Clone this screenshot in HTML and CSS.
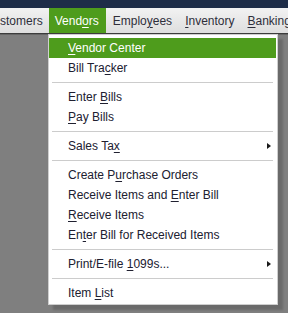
FILE: index.html
```html
<!DOCTYPE html>
<html>
<head>
<meta charset="utf-8">
<link rel="stylesheet" href="styles.css">
</head>
<body>
<div class="titlebar"></div>
<div class="menubar">
  <span class="mitem first">stomers</span>
  <span class="mitem active">Vend<u>o</u>rs</span>
  <span class="mitem">Emplo<u>y</u>ees</span>
  <span class="mitem"><u>I</u>nventory</span>
  <span class="mitem"><u>B</u>anking</span>
</div>
<div class="workspace"></div>
<div class="dropdown">
  <div class="row hl"><u>V</u>endor Center</div>
  <div class="row">Bill Tra<u>c</u>ker</div>
  <div class="sep"></div>
  <div class="row">Enter <u>B</u>ills</div>
  <div class="row"><u>P</u>ay Bills</div>
  <div class="sep"></div>
  <div class="row sub">Sales Ta<u>x</u><span class="arrow"></span></div>
  <div class="sep"></div>
  <div class="row">Create P<u>u</u>rchase Orders</div>
  <div class="row">Receive Items and <u>E</u>nter Bill</div>
  <div class="row"><u>R</u>eceive Items</div>
  <div class="row">En<u>t</u>er Bill for Received Items</div>
  <div class="sep"></div>
  <div class="row sub">Print/E-file <u>1</u>099s...<span class="arrow"></span></div>
  <div class="sep"></div>
  <div class="row">Item <u>L</u>ist</div>
</div>
</body>
</html>
```

FILE: styles.css
```css
html, body {
  margin: 0;
  padding: 0;
}
body {
  width: 288px;
  height: 313px;
  overflow: hidden;
  background: #7f7f7f;
  font-family: "Liberation Sans", Arial, sans-serif;
  font-size: 12px;
  position: relative;
}
u {
  text-decoration: underline;
  text-underline-offset: 2px;
}
.titlebar {
  height: 8px;
  background: #1e2d48;
}
.menubar {
  height: 25px;
  display: flex;
  align-items: stretch;
  background: linear-gradient(#f2f2f2, #dedede);
  border-bottom: 1px solid #3c3c3c;
  box-shadow: 0 1px 0 #666;
  white-space: nowrap;
  overflow: hidden;
}
.mitem {
  display: flex;
  align-items: center;
  padding: 0 6px 0 7px;
  color: #2e2e3a;
  font-size: 12px;
}
.mitem.first {
  padding-left: 0;
  padding-right: 6px;
}
.mitem.active {
  background: #4e9c1c;
  color: #ffffff;
  padding: 0 7px 0 6px;
  margin-left: 0;
}
.workspace {
  height: 279px;
}
.dropdown {
  position: absolute;
  left: 48px;
  top: 34px;
  width: 227px;
  background: #ffffff;
  border: 1px solid #cfcfcf;
  padding: 3px 1px 1px 0;
  box-shadow: 5px 5px 2px rgba(0, 0, 0, 0.16);
}
.row {
  height: 20px;
  line-height: 20px;
  padding-left: 19px;
  color: #202030;
  position: relative;
  white-space: nowrap;
}
.row.hl {
  background: #4e9c1c;
  color: #ffffff;
}
.sep {
  height: 9px;
  position: relative;
}
.sep::after {
  content: "";
  position: absolute;
  left: 3px;
  right: 3px;
  top: 4px;
  height: 1px;
  background: #cccccc;
}
.arrow {
  position: absolute;
  right: 5px;
  top: 7px;
  width: 0;
  height: 0;
  border-left: 4px solid #1a1a1a;
  border-top: 3.5px solid transparent;
  border-bottom: 3.5px solid transparent;
}
```
